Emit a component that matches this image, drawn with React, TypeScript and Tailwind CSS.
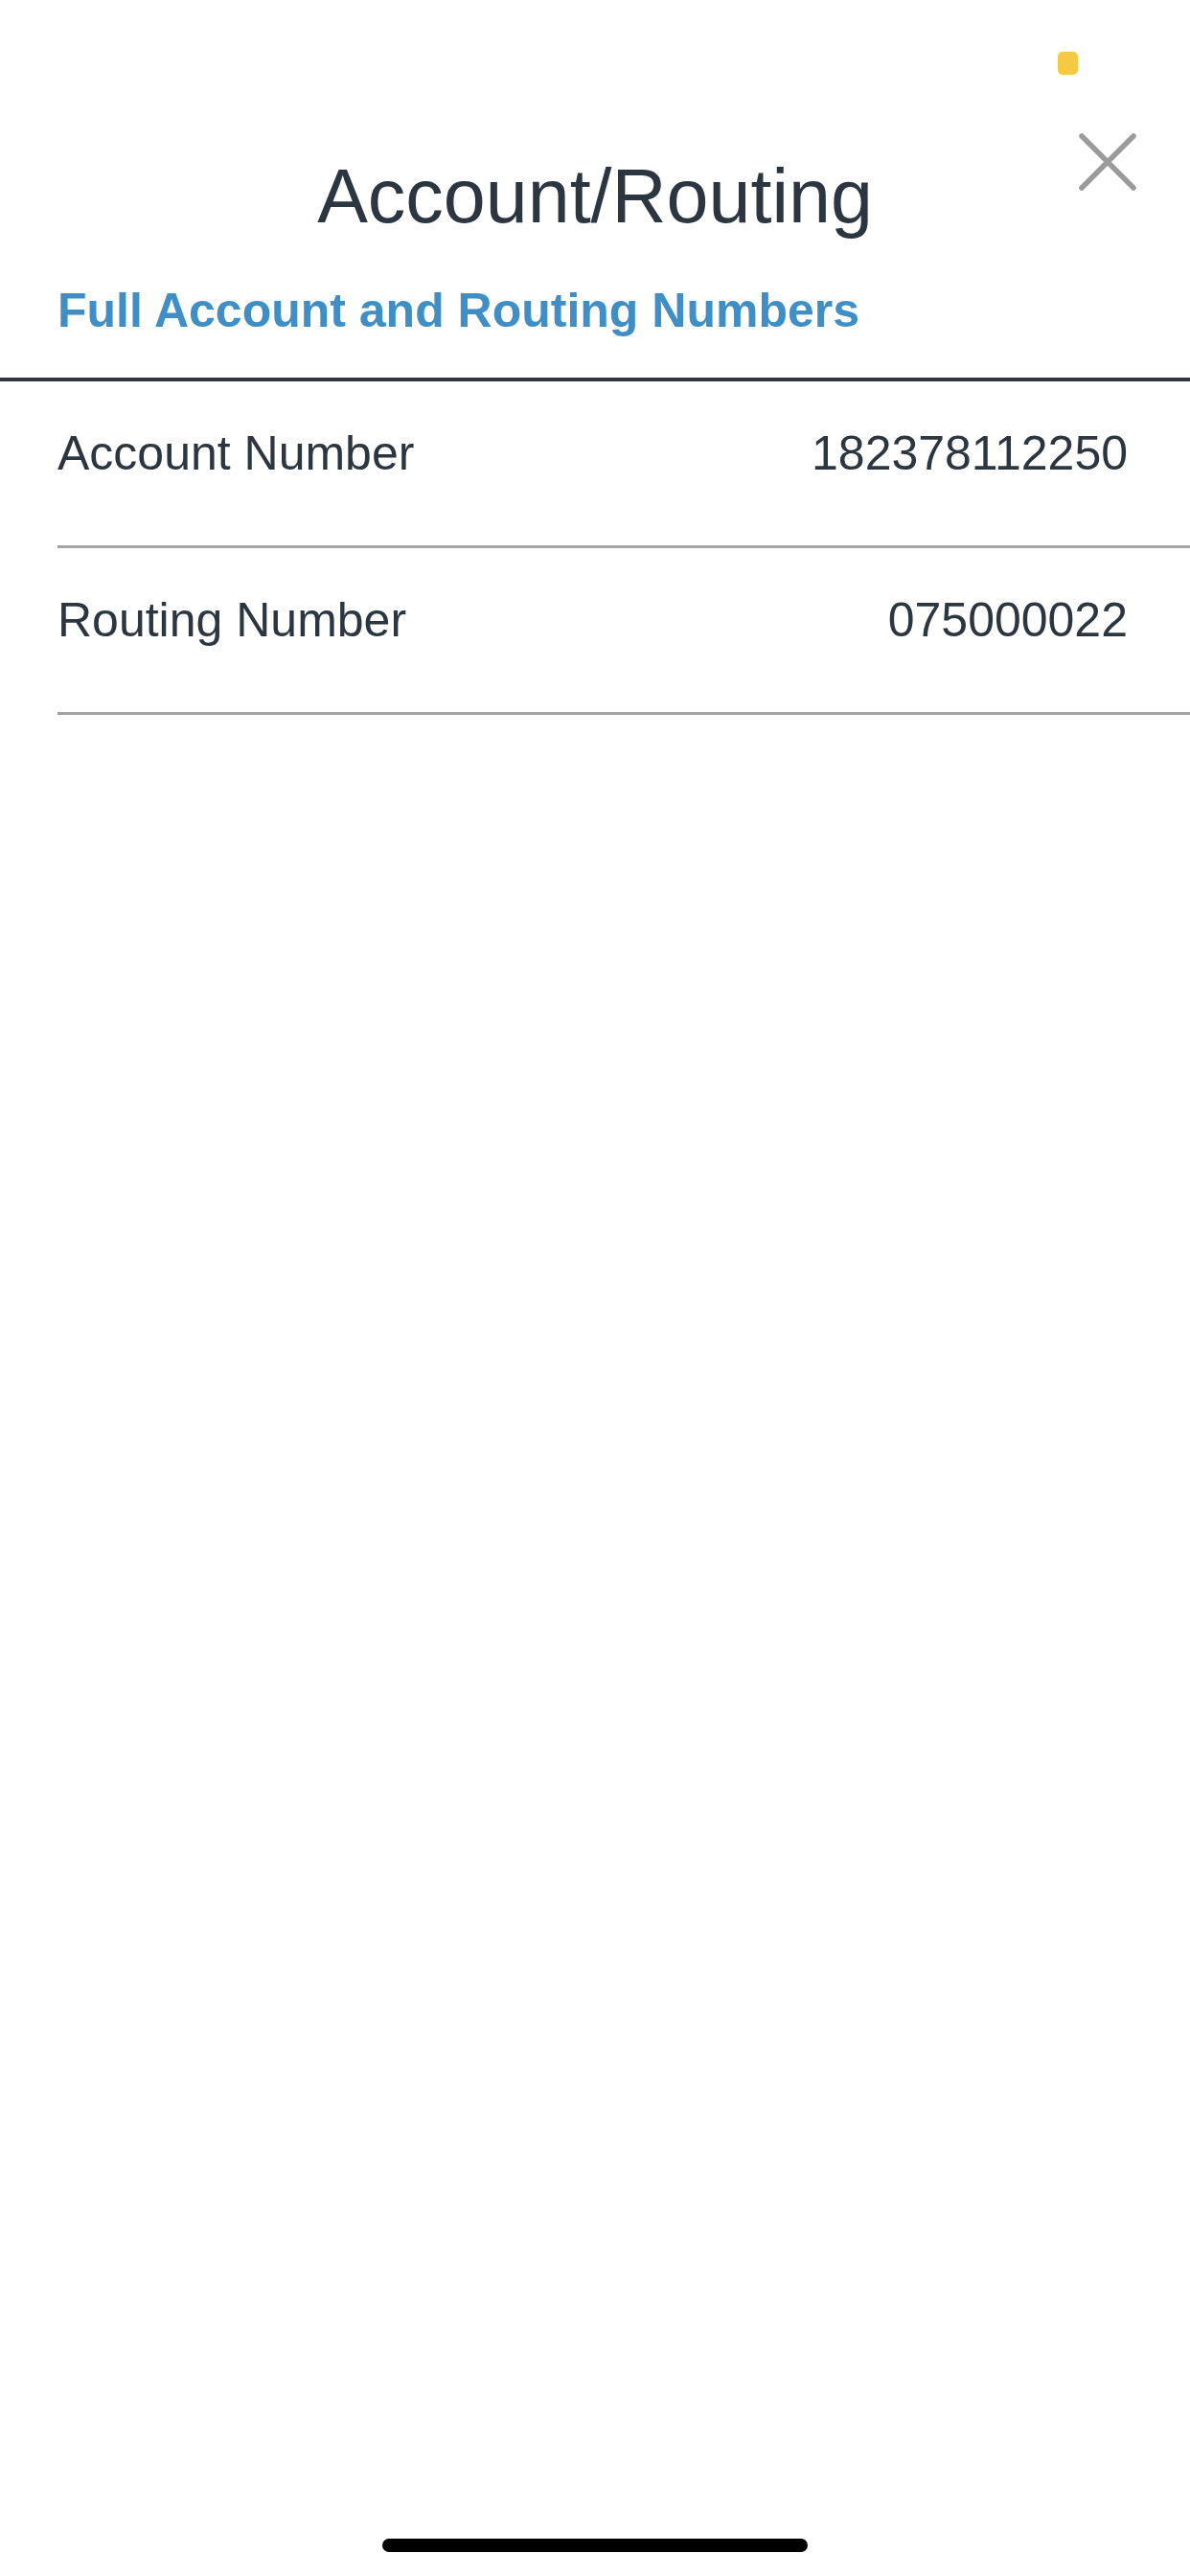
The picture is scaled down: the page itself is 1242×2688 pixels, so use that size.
import { useState } from "react";

interface NumberRow {
    label: string;
    value: string;
}

const rows: NumberRow[] = [
    { label: "Account Number", value: "182378112250" },
    { label: "Routing Number", value: "075000022" },
];

export default function App() {
    const [open, setOpen] = useState(true);

    return (
        <div className="relative min-h-[2688px] w-[1242px] overflow-hidden bg-white font-['Liberation_Sans',Arial,sans-serif] text-[#2c3640]">
            {/* status indicator */}
            <div className="absolute left-[1104px] top-[54px] h-[24px] w-[21px] rounded-[5px] bg-[#f6c944]" />

            <button
                aria-label="Close"
                onClick={() => setOpen(!open)}
                className="absolute left-[1126px] top-[139px] h-[60px] w-[60px]"
            >
                <svg viewBox="0 0 60 60" className="h-[60px] w-[60px]" fill="none" stroke="#9b9b9b" strokeWidth={5.5} strokeLinecap="round">
                    <path d="M3 3 L57 57" />
                    <path d="M57 3 L3 57" />
                </svg>
            </button>

            <h1 className="pt-[165px] text-center text-[79px] font-normal leading-none">Account/Routing</h1>

            <h2 className="mt-[55px] px-[60px] text-[50px] font-bold leading-none text-[#3f8fc6]">
                Full Account and Routing Numbers
            </h2>

            <div className="mt-[45px] h-[4px] w-full bg-[#2e3843]" />

            <div className="pl-[60px]">
                {rows.map((row) => (
                    <div
                        key={row.label}
                        className="flex items-center justify-between border-b-[3px] border-[#a3a3a3] pb-[71px] pr-[65px] pt-[50px] text-[50px] leading-none"
                    >
                        <span>{row.label}</span>
                        <span>{row.value}</span>
                    </div>
                ))}
            </div>

            {/* home indicator */}
            <div className="absolute left-[399px] top-[2649px] h-[14px] w-[444px] rounded-full bg-black" />
        </div>
    );
}
